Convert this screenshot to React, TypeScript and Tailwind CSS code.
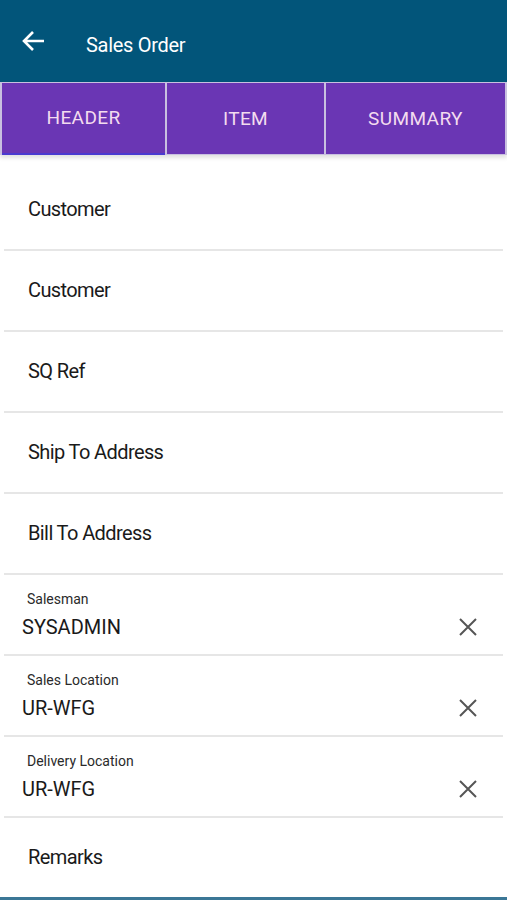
import React from 'react';

const fields = [
  { label: 'Customer' },
  { label: 'Customer' },
  { label: 'SQ Ref' },
  { label: 'Ship To Address' },
  { label: 'Bill To Address' },
  { label: 'Salesman', value: 'SYSADMIN' },
  { label: 'Sales Location', value: 'UR-WFG' },
  { label: 'Delivery Location', value: 'UR-WFG' },
];

const CloseIcon = () => (
  <svg width="18" height="18" viewBox="0 0 18 18" className="text-[#555]">
    <path d="M1 1L17 17M17 1L1 17" stroke="currentColor" strokeWidth="2" />
  </svg>
);

export default function App() {
  const tabs = ['HEADER', 'ITEM', 'SUMMARY'];
  return (
    <div className="w-[507px] h-[900px] flex flex-col bg-white overflow-hidden font-['Roboto','Liberation_Sans',sans-serif]">
      <div className="h-[82px] shrink-0 bg-[#02557a] flex items-center px-[22px] gap-[40px]">
        <svg width="24" height="22" viewBox="0 0 24 22" className="text-white">
          <path d="M22 11H3M11 2L2 11L11 20" stroke="currentColor" strokeWidth="2.6" fill="none" />
        </svg>
        <span className="text-white text-[20px] mt-[8px] tracking-[-0.3px]">Sales Order</span>
      </div>

      <div className="h-[73px] shrink-0 flex bg-[#c9c0e0] px-[2px] pt-px gap-[2px] shadow-[0_3px_4px_rgba(0,0,0,0.12)] relative z-10">
        {tabs.map((t, i) => (
          <div
            key={t}
            className={`flex items-center justify-center pt-px bg-[#6a36b4] text-[#f3dcef] text-[19px] tracking-[0.4px] ${
              i === 0 ? 'w-[163px] border-b-2 border-[#4a3ad0]' : i === 1 ? 'w-[157px] mb-px' : 'flex-1 mb-px'
            }`}
          >
            {t}
          </div>
        ))}
      </div>

      <div className="flex-1 flex flex-col pt-[15px] px-[4px]">
        {fields.map((f, i) => (
          <div key={i} className="h-[81px] shrink-0 border-b-2 border-[#e6e6e6] flex flex-col justify-center">
            {f.value ? (
              <div className="flex flex-col">
                <span className="text-[14px] text-[#2a2a2a] pl-[23px] leading-[18px]">{f.label}</span>
                <div className="flex items-center justify-between pl-[18px] pr-[26px] mt-[7px]">
                  <span className="text-[20px] text-[#1a1a1a] leading-[24px]">{f.value}</span>
                  <CloseIcon />
                </div>
              </div>
            ) : (
              <span className="text-[20px] text-[#1a1a1a] pl-[24px] -mt-[2px] tracking-[-0.6px]">{f.label}</span>
            )}
          </div>
        ))}
        <div className="flex-1 flex items-center">
          <span className="text-[20px] text-[#1a1a1a] pl-[24px] -mt-[2px] tracking-[-0.6px]">Remarks</span>
        </div>
      </div>
      <div className="h-[3px] shrink-0 bg-[#3b7796]" />
    </div>
  );
}
